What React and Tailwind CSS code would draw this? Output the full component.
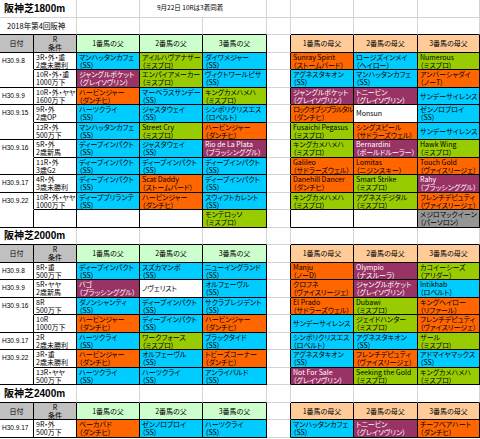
import React from 'react';

// column widths: 日付 / R条件 / 父x3 / gap / 母父x3
const W = ['w-[34px]', 'w-[43px]', 'w-[63px]', 'w-[63px]', 'w-[64px]', 'w-[24px]', 'w-[63px]', 'w-[64px]', 'w-[62px]'];

const BG = {
  c: 'bg-[#00ccff] text-black',
  g: 'bg-[#99cc00] text-black',
  o: 'bg-[#ff6600] text-black',
  p: 'bg-[#993366] text-white',
  w: 'bg-white text-black',
  y: 'bg-[#969696] text-black',
};

const dp = ['c', 'ディープインパクト', '（SS）'];

const s1800 = [
  { d: 'H30.9.8', r: ['3R・外・重', '2歳未勝利'], s: [['c', 'マンハッタンカフェ', '（SS）'], ['g', 'アイルハヴアナザー', '（ミスプロ）'], ['c', 'ダイワメジャー', '（SS）']], m: [['o', 'Sunray Spirit', '（ストームバード）'], ['c', 'ロージズインメイ', '（ヘイロー）'], ['g', 'Numerous', '（ミスプロ）']] },
  { d: '', r: ['10R・外・重', '1000万下'], s: [['p', 'ジャングルポケット', '（グレイソヴリン）'], ['g', 'エンパイアメーカー', '（ミスプロ）'], ['c', 'ヴィクトワールピサ', '（SS）']], m: [['c', 'アグネスタキオン', '（SS）'], ['c', 'マンハッタンカフェ', '（SS）'], ['o', 'アンバーシャダイ', '（ノーT）']] },
  { d: 'H30.9.9', r: ['10R・外・ヤヤ', '1600万下'], s: [['o', 'ハービンジャー', '（ダンチヒ）'], ['c', 'マーベラスサンデー', '（SS）'], ['g', 'キングカメハメハ', '（ミスプロ）']], m: [['p', 'ジャングルポケット', '（グレイソヴリン）'], ['p', 'トニービン', '（グレイソヴリン）'], ['c', 'サンデーサイレンス']] },
  { d: 'H30.9.15', r: ['9R・外', '2歳OP'], s: [['c', 'ハーツクライ', '（SS）'], ['c', 'ジャスタウェイ', '（SS）'], ['c', 'シンボリクリスエス', '（ロベルト）']], m: [['o', 'ロックオブジブラルタル', '（ダンチヒ）'], ['w', 'Monsun'], ['c', 'ゼンノロブロイ', '（SS）']] },
  { d: '', r: ['12R・外', '500万下'], s: [['c', 'マンハッタンカフェ', '（SS）'], ['g', 'Street Cry', '（ミスプロ）'], ['o', 'ハービンジャー', '（ダンチヒ）']], m: [['g', 'Fusaichi Pegasus', '（ミスプロ）'], ['o', 'シングスピール', '（サドラーズウェル）'], ['c', 'サンデーサイレンス']] },
  { d: 'H30.9.16', r: ['5R・外', '2歳新馬'], s: [dp, ['c', 'ジャスタウェイ', '（SS）'], ['p', 'Rio de La Plata', '（ブラッシンググル）']], m: [['g', 'キングカメハメハ', '（ミスプロ）'], ['p', 'Bernardini', '（ボールドルーラー）'], ['g', 'Hawk Wing', '（ミスプロ）']] },
  { d: '', r: ['11R・外', '3歳G2'], s: [dp, dp, dp], m: [['o', 'Galileo', '（サドラーズウェル）'], ['o', 'Lomitas', '（ニジンスキー）'], ['o', 'Touch Gold', '（ヴァイスリージェ）']] },
  { d: 'H30.9.17', r: ['4R・外', '3歳未勝利'], s: [dp, ['o', 'Scat Daddy', '（ストームバード）'], dp], m: [['o', 'Danehill Dancer', '（ダンチヒ）'], ['g', 'Smart Strike', '（ミスプロ）'], ['p', 'Rahy', '（ブラッシンググル）']] },
  { d: 'H30.9.22', r: ['10R・外・ヤヤ', '1000万下'], s: [['c', 'ディープブリランテ', '（SS）'], ['o', 'ハービンジャー', '（ダンチヒ）'], ['c', 'スウィフトカレント', '（SS）']], m: [['g', 'キングカメハメハ', '（ミスプロ）'], ['g', 'アグネスデジタル', '（ミスプロ）'], ['o', 'フレンチデピュティ', '（ヴァイスリージェ）']] },
  { d: '', r: null, s: [null, null, ['g', 'モンテロッソ', '（ミスプロ）']], m: [null, null, ['y', 'メジロマックイーン', '（パーソロン）']] },
];

const s2000 = [
  { d: 'H30.9.8', r: ['8R・重', '500万下'], s: [dp, ['c', 'スズカマンボ', '（SS）'], ['c', 'ニューイングランド', '（SS）']], m: [['o', 'Manju', '（ノーD）'], ['p', 'Olympio', '（ナスルーラ）'], ['g', 'カコイーシーズ', '（アリダー）']] },
  { d: 'H30.9.9', r: ['5R・ヤヤ', '2歳新馬'], s: [['p', 'バゴ', '（ブラッシンググル）'], ['w', 'ノヴェリスト'], ['c', 'オルフェーヴル', '（SS）']], m: [['o', 'クロフネ', '（ヴァイスリージェ）'], ['p', 'ジャングルポケット', '（グレイソヴリン）'], ['c', 'Intikhab', '（ロベルト）']] },
  { d: 'H30.9.16', r: ['8R', '500万下'], s: [['c', 'ダノンシャンティ', '（SS）'], dp, ['c', 'サクラプレジデント', '（SS）']], m: [['o', 'El Prado', '（サドラーズウェル）'], ['g', 'Dubawi', '（ミスプロ）'], ['o', 'キングヘイロー', '（リファール）']] },
  { d: '', r: ['10R', '1000万下'], s: [['o', 'ハービンジャー', '（ダンチヒ）'], dp, ['o', 'ハービンジャー', '（ダンチヒ）']], m: [['c', 'サンデーサイレンス'], ['g', 'ジェイドハンター', '（ミスプロ）'], ['o', 'フレンチデピュティ', '（ヴァイスリージェ）']] },
  { d: 'H30.9.17', r: ['2R', '2歳未勝利'], s: [['c', 'ハーツクライ', '（SS）'], ['g', 'ワークフォース', '（ミスプロ）'], ['c', 'ブラックタイド', '（SS）']], m: [['c', 'シンボリクリスエス', '（ロベルト）'], ['c', 'アグネスタキオン', '（SS）'], ['g', 'ザール', '（ミスプロ）']] },
  { d: 'H30.9.22', r: ['3R・重', '2歳未勝利'], s: [['o', 'ハービンジャー', '（ダンチヒ）'], ['c', 'オルフェーヴル', '（SS）'], ['o', 'トビーズコーナー', '（ダンチヒ）']], m: [['c', 'アグネスタキオン', '（SS）'], ['o', 'フレンチデピュティ', '（ヴァイスリージェ）'], ['c', 'アドマイヤマックス', '（SS）']] },
  { d: '', r: ['13R・ヤヤ', '500万下'], s: [['c', 'ハーツクライ', '（SS）'], ['c', 'ハーツクライ', '（SS）'], ['c', 'アンライバルド', '（SS）']], m: [['p', 'Not For Sale', '（グレイソヴリン）'], ['g', 'Seeking the Gold', '（ミスプロ）'], ['g', 'キングカメハメハ', '（ミスプロ）']] },
];

const s2400 = [
  { d: 'H30.9.17', r: ['9R・外', '500万下'], s: [['o', 'ベーカバド', '（ダンチヒ）'], ['c', 'ゼンノロブロイ', '（SS）'], ['c', 'ハーツクライ', '（SS）']], m: [['c', 'マンハッタンカフェ', '（SS）'], ['p', 'トニービン', '（グレイソヴリン）'], ['o', 'チーフベアハート', '（ダンチヒ）']] },
];

// only squeeze long katakana names, latin names fit as they are
const tight = (t) => t.length > 10 && !/[A-Za-z]/.test(t);

const Horse = ({ w, h }) => (
  <div className={`${w} ${h ? BG[h[0]] : 'bg-white'} shrink-0 h-full border-r border-b border-black flex flex-col justify-center pl-[2px] leading-[8px] overflow-hidden whitespace-nowrap`}>
    {h && h.slice(1).map((t, i) => (
      <span key={i} className={tight(t) ? 'tracking-[-0.9px]' : ''}>{t}</span>
    ))}
  </div>
);

const Gap = ({ edge }) => (
  <div className={`${W[5]} shrink-0 h-full border-r border-b ${edge ? 'border-r-[#d4d4d4]' : 'border-r-black'} border-b-[#d4d4d4]`} />
);

const Light = ({ w, dark, children, className = '' }) => (
  <div className={`${w} shrink-0 h-full border-r border-b border-r-[#d4d4d4] ${dark ? 'border-b-black' : 'border-b-[#d4d4d4]'} ${className}`}>
    {children}
  </div>
);

const TitleRow = ({ title, note, dark }) => (
  <div className="flex h-[17.5px]">
    <Light w="w-[77px]" dark={dark} className="flex items-center pl-[4px] font-['Liberation_Sans','Noto_Sans_CJK_JP',sans-serif] font-bold text-[10px]">
      {title}
    </Light>
    <Light w={W[2]} dark={dark} />
    {note ? (
      <Light w="w-[127px]" dark={dark} className="flex items-center pl-[17px] text-[6.5px]">{note}</Light>
    ) : (
      <>
        <Light w={W[3]} dark={dark} />
        <Light w={W[4]} dark={dark} />
      </>
    )}
    <Gap edge />
    <Light w={W[6]} dark={dark} />
    <Light w={W[7]} dark={dark} />
    <Light w={W[8]} dark={dark} />
  </div>
);

const SubRow = ({ text }) => (
  <div className="flex h-[17.5px]">
    <Light w="w-[77px]" dark className="flex items-center pl-[7px] text-[7.5px]">{text}</Light>
    <Light w={W[2]} dark />
    <Light w={W[3]} dark />
    <Light w={W[4]} dark />
    <Gap edge />
    <Light w={W[6]} dark />
    <Light w={W[7]} dark />
    <Light w={W[8]} dark />
  </div>
);

const Header = () => (
  <div className="flex h-[17.5px] text-center">
    <div className={`${W[0]} shrink-0 h-full border-r border-b border-black bg-[#c0c0c0] flex items-center justify-center`}>日付</div>
    <div className={`${W[1]} shrink-0 h-full border-r border-b border-black bg-[#c0c0c0] flex flex-col justify-center leading-[8px]`}>
      <span>R</span>
      <span>条件</span>
    </div>
    {['1番馬の父', '2番馬の父', '3番馬の父'].map((t, i) => (
      <div key={t} className={`${W[2 + i]} shrink-0 h-full border-r border-b border-black bg-[#ccffcc] flex items-center justify-center`}>{t}</div>
    ))}
    <Gap />
    {['1番馬の母父', '2番馬の母父', '3番馬の母父'].map((t, i) => (
      <div key={t} className={`${W[6 + i]} shrink-0 h-full border-r border-b border-black bg-[#ffcc99] flex items-center justify-center`}>{t}</div>
    ))}
  </div>
);

const DataRow = ({ row, endGroup }) => (
  <div className="flex h-[17.5px]">
    <div className={`${W[0]} shrink-0 h-full border-r border-b border-r-black ${endGroup ? 'border-b-black' : 'border-b-white'} flex items-center pl-[2px] font-['Liberation_Sans',sans-serif] text-[6.5px]`}>
      {row.d}
    </div>
    <div className={`${W[1]} shrink-0 h-full border-r border-b border-black flex flex-col justify-center pl-[2px] leading-[8px] whitespace-nowrap overflow-hidden`}>
      {row.r && row.r.map((t) => <span key={t}>{t}</span>)}
    </div>
    {row.s.map((h, i) => <Horse key={i} w={W[2 + i]} h={h} />)}
    <Gap />
    {row.m.map((h, i) => <Horse key={i} w={W[6 + i]} h={h} />)}
  </div>
);

const Section = ({ title, note, sub, rows }) => (
  <>
    <TitleRow title={title} note={note} dark={!sub} />
    {sub && <SubRow text={sub} />}
    <Header />
    {rows.map((r, i) => (
      <DataRow key={i} row={r} endGroup={i === rows.length - 1 || rows[i + 1].d !== ''} />
    ))}
  </>
);

export default function App() {
  return (
    <div className="w-[480px] h-[439px] overflow-hidden bg-white text-black text-[7px] font-['Noto_Sans_CJK_JP',sans-serif] [font-feature-settings:'palt']">
      <Section title="阪神芝1800m" note="9月22日 10Rは3着同着" sub="2018年第4回阪神" rows={s1800} />
      <Section title="阪神芝2000m" rows={s2000} />
      <Section title="阪神芝2400m" rows={s2400} />
    </div>
  );
}
